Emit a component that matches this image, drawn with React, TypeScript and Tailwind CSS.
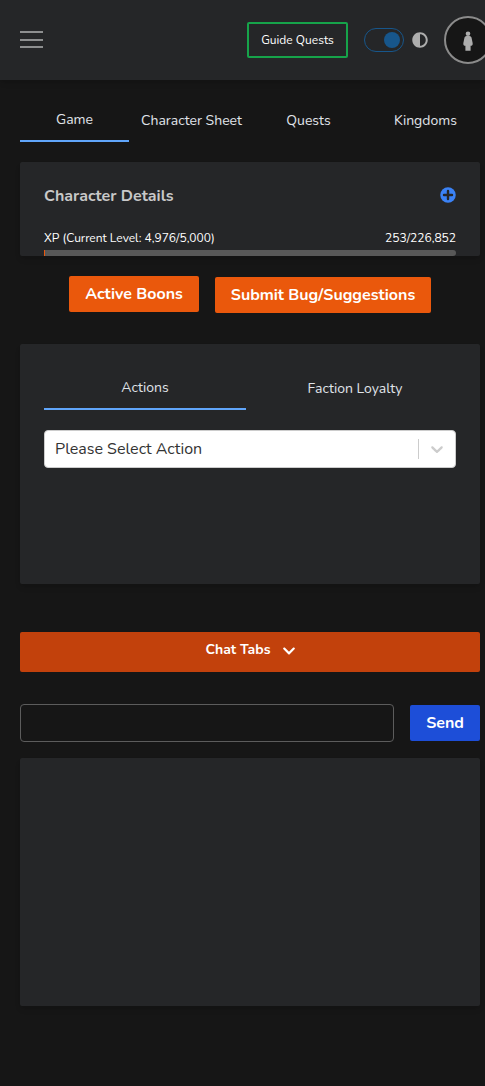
import React from "react";
import { FaAdjust, FaChevronDown } from "react-icons/fa";

const pageTabs = ["Game", "Character Sheet", "Quests", "Kingdoms"];
const actionTabs = ["Actions", "Faction Loyalty"];

function Tabs({ tabs, columns }: { tabs: string[]; columns: string }) {
  return (
    <div className={`grid gap-2 ${columns}`}>
      {tabs.map((tab, index) => (
        <button
          key={tab}
          className={`flex h-[42px] justify-center whitespace-nowrap text-sm leading-5 text-[#e0e4ea] ${
            index === 0 ? "border-b-2 border-[#60a5fa] pt-2.5" : "pt-[11px]"
          }`}
        >
          {tab}
        </button>
      ))}
    </div>
  );
}

function Header() {
  return (
    <header className="flex h-20 items-center overflow-hidden bg-[#252628] pl-5 shadow-md">
      <button aria-label="Menu" className="-mt-px flex w-[23px] shrink-0 flex-col">
        <span className="h-0.5 bg-[#8d8e8f]" />
        <span className="mt-1.5 h-0.5 bg-[#8d8e8f]" />
        <span className="mt-[5px] h-0.5 bg-[#8d8e8f]" />
      </button>
      <button className="ml-[204px] flex h-9 w-[101px] shrink-0 items-center justify-center whitespace-nowrap rounded-xs border-2 border-[#16a34a] text-xs text-white">
        Guide Quests
      </button>
      <div className="ml-4 flex h-6 w-10 shrink-0 items-center justify-end rounded-full border border-[#17568b] pr-[3px]">
        <span className="size-4 rounded-full bg-[#17568b]" />
      </div>
      <FaAdjust className="ml-2 size-4 shrink-0 text-[#adadad]" />
      <div className="ml-4 flex size-12 shrink-0 items-center justify-center rounded-full border-2 border-[#8b8b8b] bg-[#161616]">
        <svg viewBox="0 0 10 20" className="mt-px h-5 w-2.5 fill-[#adadad]">
          <circle cx="5" cy="2.7" r="2.3" />
          <path d="M3.5 5h3q1.6 0 2 1.6L9.7 12.2Q9.9 14.5 8.6 14.7H7.6V19.8H2.4V14.7H1.4Q.1 14.5.3 12.2L1.5 6.6Q1.9 5 3.5 5Z" />
        </svg>
      </div>
    </header>
  );
}

export default function App() {
  return (
    <div className="h-[1086px] w-[485px] overflow-hidden bg-[#161616] font-['Nunito',sans-serif]">
      <Header />
      <main className="ml-5 w-[460px] pt-5">
        <Tabs tabs={pageTabs} columns="grid-cols-4" />

        <section className="mt-5 h-[94px] rounded-xs bg-[#252628] px-6 pt-[22px] shadow-md">
          <div className="flex h-6 items-center justify-between">
            <h4 className="text-base font-bold text-[#c8c8c8]">Character Details</h4>
            <svg viewBox="0 0 16 16" className="-mt-0.5 size-4">
              <circle cx="8" cy="8" r="7.75" fill="#3b82f6" />
              <path d="M8 4v8M4 8h8" stroke="#252628" strokeWidth="2.4" strokeLinecap="round" />
            </svg>
          </div>
          <div className="mt-[22px] flex h-4 justify-between whitespace-nowrap text-xs leading-4 text-white">
            <span>XP (Current Level: 4,976/5,000)</span>
            <span>253/226,852</span>
          </div>
          <div className="mt-1 h-1.5 rounded-r-full bg-[#585858]">
            <div className="h-1.5 w-px bg-[#ea580c]" />
          </div>
        </section>

        <div className="mt-5 flex h-[37px] justify-center gap-4 whitespace-nowrap text-base font-bold leading-6 text-white">
          <button className="h-9 w-[130px] rounded-xs bg-[#ea580c]">Active Boons</button>
          <button className="mt-px h-9 w-[216px] rounded-xs bg-[#ea580c]">Submit Bug/Suggestions</button>
        </div>

        <section className="mt-[31px] h-60 rounded-xs bg-[#252628] p-6 shadow-md">
          <Tabs tabs={actionTabs} columns="grid-cols-2" />
          <div className="mt-5 flex h-[38px] items-center rounded border border-[#cccccc] bg-white pl-2.5 text-base text-[#333333]">
            <span>Please Select Action</span>
            <span className="ml-auto h-5 w-px bg-[#cccccc]" />
            <svg viewBox="0 0 20 20" className="mx-2 size-5 fill-[#cccccc]">
              <path d="M4.516 7.548c0.436-0.446 1.043-0.481 1.576 0l3.908 3.747 3.908-3.747c0.533-0.481 1.141-0.446 1.574 0 0.436 0.445 0.408 1.197 0 1.615-0.406 0.418-4.695 4.502-4.695 4.502-0.217 0.223-0.502 0.335-0.787 0.335s-0.57-0.112-0.789-0.335c0 0-4.287-4.084-4.695-4.502s-0.436-1.17 0-1.615z" />
            </svg>
          </div>
        </section>

        <button className="mt-12 flex h-10 w-full items-start justify-center gap-[11px] rounded-xs bg-[#c2410c] pl-px pt-2 text-sm font-bold leading-5 text-white">
          <span>Chat Tabs</span>
          <FaChevronDown className="mt-1 size-3.5" />
        </button>

        <div className="mt-8 flex h-[38px] items-center gap-4">
          <input aria-label="Message" className="h-[38px] w-[374px] rounded border border-[#5c5c5c] bg-transparent px-3 text-white" />
          <button className="h-9 w-[70px] rounded-xs bg-[#1d4ed8] text-base font-bold text-white">Send</button>
        </div>
        <section className="mt-4 h-[248px] rounded-xs bg-[#252628] shadow-md" />
      </main>
    </div>
  );
}
